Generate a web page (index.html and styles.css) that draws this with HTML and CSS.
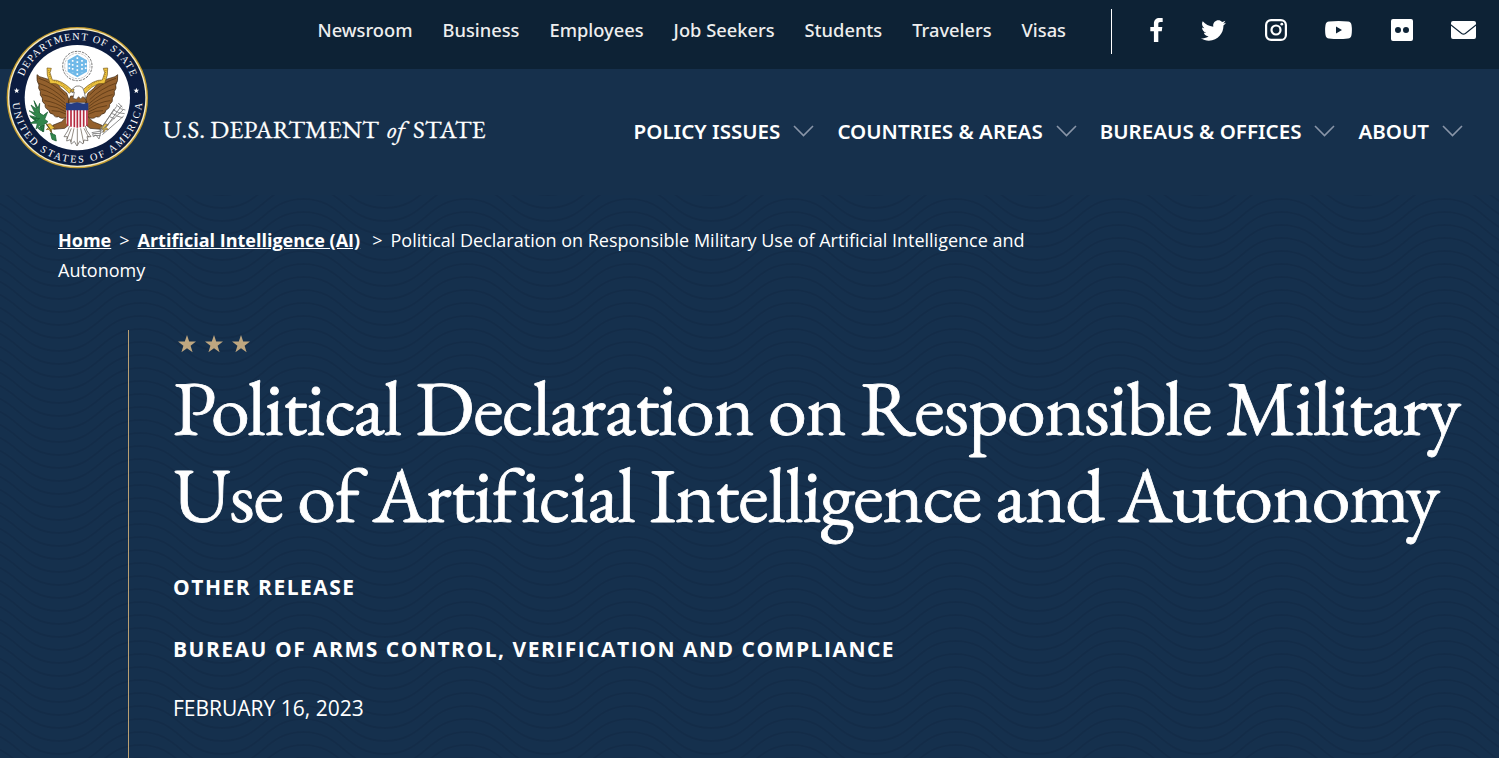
FILE: index.html
```html
<!DOCTYPE html>
<html lang="en">
<head>
<meta charset="UTF-8">
<meta name="viewport" content="width=device-width, initial-scale=1.0">
<title>Political Declaration on Responsible Military Use of Artificial Intelligence and Autonomy</title>
<link rel="stylesheet" href="styles.css">
</head>
<body>

<div class="top-bar">
    <nav class="top-nav">
        <a href="#">Newsroom</a>
        <a href="#">Business</a>
        <a href="#">Employees</a>
        <a href="#">Job Seekers</a>
        <a href="#">Students</a>
        <a href="#">Travelers</a>
        <a href="#">Visas</a>
    </nav>
    <div class="social">
        <a href="#" aria-label="Facebook"><svg width="13" height="24" viewBox="0 0 264 512"><path d="M76.7 512V283H0v-91h76.7v-71.7C76.7 42.4 124.3 0 193.8 0c33.3 0 61.9 2.5 70.2 3.6V85h-48.2c-37.8 0-45.1 18-45.1 44.3V192H256l-11.7 91h-73.6v229"/></svg></a>
        <a href="#" aria-label="Twitter"><svg width="25" height="25" viewBox="0 0 512 512"><path d="M459.37 151.716c.325 4.548.325 9.097.325 13.645 0 138.72-105.583 298.558-298.558 298.558-59.452 0-114.68-17.219-161.137-47.106 8.447.974 16.568 1.299 25.34 1.299 49.055 0 94.213-16.568 130.274-44.832-46.132-.975-84.792-31.188-98.112-72.772 6.498.974 12.995 1.624 19.818 1.624 9.421 0 18.843-1.3 27.614-3.573-48.081-9.747-84.143-51.98-84.143-102.985v-1.299c13.969 7.797 30.214 12.67 47.431 13.319-28.264-18.843-46.781-51.005-46.781-87.391 0-19.492 5.197-37.36 14.294-52.954 51.655 63.675 129.3 105.258 216.365 109.807-1.624-7.797-2.599-15.918-2.599-24.04 0-57.828 46.782-104.934 104.934-104.934 30.213 0 57.502 12.67 76.67 33.137 23.715-4.548 46.456-13.32 66.599-25.34-7.798 24.366-24.366 44.833-46.132 57.827 21.117-2.273 41.584-8.122 60.426-16.243-14.292 20.791-32.161 39.308-52.628 54.253z"/></svg></a>
        <a href="#" aria-label="Instagram"><svg width="22" height="22" viewBox="0 0 22 22"><rect class="line" x="1.1" y="1.1" width="19.8" height="19.8" rx="5"/><circle class="line" cx="11" cy="11" r="4.5"/><circle cx="16.8" cy="5.2" r="1.4"/></svg></a>
        <a href="#" aria-label="YouTube"><svg width="27" height="18" viewBox="0 0 27 18"><path fill-rule="evenodd" d="M4 .5Q13.5-.5 23 .5Q26 .8 26.5 4Q27.3 9 26.5 14Q26 17.2 23 17.5Q13.5 18.5 4 17.5Q1 17.2 .5 14Q-.3 9 .5 4Q1 .8 4 .5ZM11 5.5V12.5L17 9Z"/></svg></a>
        <a href="#" aria-label="Flickr"><svg width="22" height="22" viewBox="0 0 22 22"><path fill-rule="evenodd" d="M2 0H20Q22 0 22 2V20Q22 22 20 22H2Q0 22 0 20V2Q0 0 2 0ZM4 11a3 3 0 1 0 6 0a3 3 0 1 0-6 0ZM12 11a3 3 0 1 0 6 0a3 3 0 1 0-6 0Z"/></svg></a>
        <a href="#" aria-label="Email"><svg width="25" height="18" viewBox="0 0 25 18"><path d="M2 0H23Q25 0 25 2V3.3L14 12Q12.5 13 11 12L0 3.3V2Q0 0 2 0ZM0 4.8L10.3 13Q12.5 14.5 14.7 13L25 4.8V16Q25 18 23 18H2Q0 18 0 16Z"/></svg></a>
    </div>
</div>

<header class="main-header">
    <a href="#" class="logo">
        <svg class="seal" viewBox="0 0 465 465">
            <defs>
                <path id="arc-top" d="M59 233A173 173 0 0 1 405 233"/>
                <path id="arc-bottom" d="M37 233A195 195 0 0 0 427 233"/>
                <path id="star" d="M0-9L2.2-3L8.6-2.8L3.5 1.1L5.3 7.3L0 3.7L-5.3 7.3L-3.5 1.1L-8.6-2.8L-2.2-3Z"/>
                <g id="wing">
                    <path class="feather" d="M111 164L119 170Q148 178 169 187Q180 207 200 219L208 243L200 292Q184 299 176 290Q164 294 160 283Q147 282 146 270Q134 266 135 253Q124 246 127 234Q118 226 121 214Q113 205 117 195Q109 184 111 164Z"/>
                    <path class="barbs" d="M116 175Q160 188 196 226M117 190Q160 204 195 239M121 207Q158 216 196 250M126 224Q164 231 198 260M133 242Q166 245 199 268M143 257Q172 259 199 276M155 272Q178 271 200 283"/>
                    <path class="ribbon" d="M141 144L154 145L150 158L157 180Q183 178 217 211L208 220Q190 198 168 191L150 190L142 165Z"/>
                    <path class="ribbon-line" d="M146 150L151 176M162 182L178 186L204 207"/>
                </g>
            </defs>
            <circle class="gold" cx="232" cy="233" r="212"/>
            <circle class="pale" cx="232" cy="233" r="208"/>
            <circle class="navy" cx="232" cy="233" r="204"/>
            <circle class="white" cx="232" cy="233" r="158"/>
            <text class="ring-text"><textPath href="#arc-top" startOffset="65" textLength="414">DEPARTMENT OF STATE</textPath></text>
            <text class="ring-text"><textPath href="#arc-bottom" startOffset="16" textLength="580">UNITED STATES OF AMERICA</textPath></text>
            <use class="white" href="#star" x="50" y="212"/>
            <use class="white" href="#star" x="409" y="212"/>

            <circle class="cloud" cx="232" cy="138" r="38"/>
            <circle class="cloud-dots" cx="232" cy="138" r="44"/>
            <path class="sky" d="M232 104L261 121V155L232 172L203 155V121Z"/>
            <path class="sky-stars" d="M232 112V167M218 120V157M246 120V157M208 130V151M257 130V151"/>

            <use href="#wing"/>
            <use href="#wing" transform="matrix(-1 0 0 1 464 0)"/>

            <path class="plume" d="M214 304L203 333L192 350L202 350L200 363L211 359L214 372L223 364L231 378L239 364L249 372L252 360L264 362L261 350L273 350L260 331L251 303Z"/>
            <path class="quill" d="M214 325L201 357M222 325L213 366M232 325L232 374M242 325L251 368M252 325L266 352"/>
            <path class="feather" d="M201 289L185 305L158 316L161 328L194 325L211 311ZM263 289L279 305L306 316L303 328L270 325L253 311Z"/>
            <path class="feather" d="M204 247L212 228H252L261 247Z"/>
            <path class="plume" d="M219 235L223 216L216 218L211 212L221 204Q226 196 238 198Q251 200 252 214L257 235L248 230L242 237L236 230L229 238Z"/>
            <path class="ribbon" d="M211 213L222 207L220 216Z"/>

            <path class="white" d="M199 265H264V309Q264 320 232 324Q199 320 199 309Z"/>
            <path class="stripes" d="M203 268V317M213 268V320M223 268V322M232 268V323M241 268V322M251 268V320M261 268V317"/>
            <path class="chief" d="M198 248Q215 253 231 247Q248 253 265 248V271H198Z"/>

            <path class="ribbon" d="M139 314L151 311L158 319L165 323L155 328L153 337L147 328L139 329L146 322ZM325 314L313 311L306 319L299 323L309 328L311 337L317 328L325 329L318 322Z"/>

            <path class="branch" d="M105 250Q119 280 132 302Q152 323 166 362"/>
            <path class="leaf" d="M105 279L93 255L109 267L102 242L114 264L119 250L118 279L130 286L143 276L134 298L144 305L130 315L129 336L120 316L108 327L112 310L90 310L108 300L89 287L111 292L87 272ZM151 339L166 345L169 363L156 358ZM91 290L104 296L119 295L108 304ZM113 324L133 315L131 335L120 330Z"/>

            <path class="arrows" d="M305 339L365 257M302 333L369 270M307 344L371 288M298 331L350 259M299 335L342 267"/>
            <path class="arrows" d="M348 254L360 263M355 249L367 262M361 266L376 270M354 278L374 281M350 288L368 293M341 270L353 277M334 280L350 286M329 290L344 296M275 338L303 333L297 357L288 345L280 350L278 341L302 340M281 346L302 347"/>
        </svg>
        <span class="wordmark">U.S. DEPARTMENT <em>of</em> STATE</span>
    </a>
    <nav class="main-nav">
        <a href="#">POLICY ISSUES <svg class="chevron" viewBox="0 0 21 12"><path d="M1 1L10.5 10.5L20 1"/></svg></a>
        <a href="#">COUNTRIES &amp; AREAS <svg class="chevron" viewBox="0 0 21 12"><path d="M1 1L10.5 10.5L20 1"/></svg></a>
        <a href="#">BUREAUS &amp; OFFICES <svg class="chevron" viewBox="0 0 21 12"><path d="M1 1L10.5 10.5L20 1"/></svg></a>
        <a href="#">ABOUT <svg class="chevron" viewBox="0 0 21 12"><path d="M1 1L10.5 10.5L20 1"/></svg></a>
    </nav>
</header>

<main class="hero">
    <div class="breadcrumbs">
        <a href="#">Home</a><span class="sep">&gt;</span><a href="#">Artificial Intelligence (AI)</a><span class="sep wide">&gt;</span>Political Declaration on Responsible Military Use of Artificial Intelligence and Autonomy
    </div>
    <div class="featured">
        <svg class="stars" width="74" height="18" viewBox="0 0 74 18">
            <path d="M9 0L11.2 6.4L18 6.6L12.6 10.7L14.6 17.2L9 13.3L3.4 17.2L5.4 10.7L0 6.6L6.8 6.4Z"/>
            <path d="M36 0L38.2 6.4L45 6.6L39.6 10.7L41.6 17.2L36 13.3L30.4 17.2L32.4 10.7L27 6.6L33.8 6.4Z"/>
            <path d="M63 0L65.2 6.4L72 6.6L66.6 10.7L68.6 17.2L63 13.3L57.4 17.2L59.4 10.7L54 6.6L60.8 6.4Z"/>
        </svg>
        <h1>Political Declaration on Responsible Military<br>Use of Artificial Intelligence and Autonomy</h1>
        <p class="kind">OTHER RELEASE</p>
        <p class="bureau">BUREAU OF ARMS CONTROL, VERIFICATION AND COMPLIANCE</p>
        <p class="date">FEBRUARY 16, 2023</p>
    </div>
</main>

</body>
</html>
```
FILE: styles.css
```css
* {
    box-sizing: border-box;
    margin: 0;
    padding: 0;
}
body {
    font-family: "Open Sans", "Noto Sans", sans-serif;
    font-size: 18px;
    color: #ffffff;
    background-color: #16304c;
    height: 758px;
    overflow: hidden;
}
a {
    color: inherit;
    text-decoration: none;
}

/* Top bar */
.top-bar {
    display: flex;
    justify-content: flex-end;
    height: 69px;
    padding: 9px 23px 15px 0;
    background-color: #0d2235;
}
.top-nav {
    display: flex;
    gap: 30px;
    padding-right: 45px;
    font-family: "Noto Sans", sans-serif;
    font-size: 18.3px;
    font-weight: 500;
    line-height: 41px;
    color: #eeeeee;
}
.social {
    display: flex;
    align-items: center;
    justify-content: space-between;
    width: 365px;
    height: 45px;
    padding-left: 38px;
    padding-bottom: 3px;
    border-left: 1px solid #ffffff;
}
.social svg {
    display: block;
    fill: #ffffff;
}
.social .line {
    fill: none;
    stroke: #ffffff;
    stroke-width: 2.2;
}

/* Header */
.main-header {
    display: flex;
    justify-content: space-between;
    height: 126px;
    padding-right: 36px;
}
.logo {
    display: flex;
}
.seal {
    width: 155px;
    height: 155px;
    margin-top: -49px;
    position: relative;
}
.wordmark {
    padding-left: 8px;
    font-family: "EB Garamond", "Liberation Serif", serif;
    font-size: 25px;
    line-height: 121px;
    letter-spacing: 0.15px;
    white-space: nowrap;
    -webkit-text-stroke: 0.3px #ffffff;
}
.wordmark em {
    margin: 0 3px;
}
.main-nav {
    display: flex;
    gap: 23px;
    font-family: "Noto Sans", sans-serif;
    font-size: 20.55px;
    font-weight: 600;
    line-height: 124px;
    white-space: nowrap;
}
.main-nav a {
    display: flex;
    align-items: center;
    gap: 13px;
    height: 124px;
}
.chevron {
    width: 21px;
    height: 12px;
    fill: none;
    stroke: #8995a8;
    stroke-width: 1.6;
}

/* Seal artwork */
.gold { fill: #c39b2e; }
.pale { fill: #f5edc8; }
.navy { fill: #0b1c40; }
.white { fill: #ffffff; }
.ring-text {
    font-family: "Liberation Serif", serif;
    font-size: 31px;
    fill: #ffffff;
}
.cloud {
    fill: #ffffff;
    stroke: #c4c5c7;
    stroke-width: 3;
    stroke-dasharray: 7 3;
}
.cloud-dots {
    fill: none;
    stroke: #777777;
    stroke-width: 3;
    stroke-dasharray: 8 3;
}
.sky { fill: #70b9e8; }
.sky-stars {
    stroke: #ffffff;
    stroke-width: 5;
    stroke-dasharray: 5 7;
}
.feather {
    fill: #93602d;
    stroke: #37230f;
    stroke-width: 2;
}
.barbs {
    fill: none;
    stroke: #50310f;
    stroke-width: 2;
}
.ribbon {
    fill: #edc33d;
    stroke: #74551b;
    stroke-width: 2;
}
.ribbon-line {
    fill: none;
    stroke: #856321;
    stroke-width: 2;
    stroke-dasharray: 3 3;
}
.plume {
    fill: #ffffff;
    stroke: #55504a;
    stroke-width: 2;
}
.quill {
    stroke: #5d5346;
    stroke-width: 2;
}
.stripes {
    stroke: #b52a40;
    stroke-width: 5;
}
.chief { fill: #243c82; }
.branch {
    fill: none;
    stroke: #4c4b23;
    stroke-width: 3;
}
.leaf {
    fill: #31864b;
    stroke: #155b30;
    stroke-width: 2;
}
.arrows {
    fill: none;
    stroke: #777777;
    stroke-width: 2.5;
}

/* Hero */
.hero {
    height: 563px;
    padding: 30px 0 0 58px;
    background-color: #15304d;
    background-image: url("data:image/svg+xml,%3Csvg xmlns='http://www.w3.org/2000/svg' width='163' height='65'%3E%3Cg fill='none' stroke='%23122b47' stroke-opacity='.75' stroke-width='2'%3E%3Cpath id='w' d='M-82 -35C-42 -35 -40 0 0 0S42 -35 81.5 -35S123 0 163 0S205 -35 245 -35'/%3E%3Cuse href='%23w' y='13'/%3E%3Cuse href='%23w' y='26'/%3E%3Cuse href='%23w' y='39'/%3E%3Cuse href='%23w' y='52'/%3E%3Cuse href='%23w' y='65'/%3E%3Cuse href='%23w' y='78'/%3E%3Cuse href='%23w' y='91'/%3E%3C/g%3E%3C/svg%3E");
    background-position: 59px 0;
}
.breadcrumbs {
    width: 1000px;
    line-height: 30px;
}
.breadcrumbs a {
    font-weight: 700;
    text-decoration: underline;
}
.sep {
    margin: 0 8px;
}
.sep.wide {
    margin-left: 12px;
}
.featured {
    height: 440px;
    margin: 45px 0 0 70px;
    padding: 5px 0 0 44px;
    border-left: 1px solid #b99f72;
}
.stars {
    display: block;
    margin-left: 5px;
    fill: #bfa780;
}
h1 {
    margin-top: 11px;
    font-family: "EB Garamond", "Liberation Serif", serif;
    font-size: 78px;
    font-weight: 400;
    line-height: 87px;
    letter-spacing: -1.15px;
    white-space: nowrap;
    -webkit-text-stroke: 0.8px #ffffff;
}
.kind, .bureau {
    font-size: 21px;
    font-weight: 700;
    line-height: 30px;
    letter-spacing: 1.5px;
}
.kind {
    margin-top: 34px;
}
.bureau {
    margin-top: 32px;
}
.date {
    margin-top: 29px;
    font-size: 21px;
    line-height: 30px;
}
```
